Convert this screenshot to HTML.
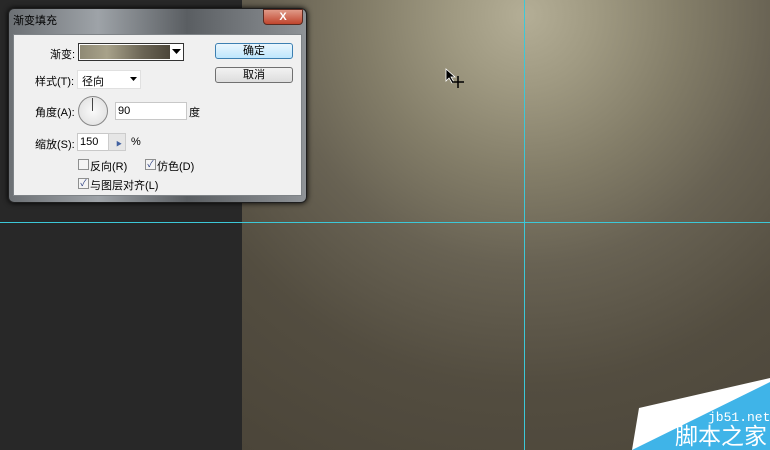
<!DOCTYPE html><html><head><style>
body{margin:0;width:770px;height:450px;overflow:hidden;position:relative;background:#282828;font-family:"Liberation Sans","Noto Sans CJK SC",sans-serif;font-size:11px;color:#000}
.a{position:absolute}
.canvas{left:242px;top:0;width:528px;height:450px;background:radial-gradient(circle at 283px 15px,#b4ae96 0,#a09a82 70px,#837d68 160px,#686253 250px,#534d40 370px,#4b4539 520px)}
.lbl{position:absolute;font-size:11px}
.box{position:absolute;background:#fff;border:1px solid #abadb3}
.btn{position:absolute;width:76px;height:14px;border:1px solid #707070;border-radius:3px;background:linear-gradient(#f2f2f2,#dddddd);text-align:center;line-height:14px}
.cb{position:absolute;width:9px;height:9px;border:1px solid #8e8f8f;background:#f4f4f4;font-size:9px;line-height:9px;text-align:center;color:#2a3e80}
</style></head><body>
<div class="a canvas"></div>
<div class="a" style="left:524px;top:0;width:1px;height:450px;background:#3cc8d8"></div>
<div class="a" style="left:0;top:222px;width:770px;height:1px;background:#3cc8d8"></div>
<svg class="a" style="left:445px;top:68px" width="20" height="20"><path d="M1 1 L1 13 L4 10 L7 15 L9 14 L6 9 L10 9 Z" fill="#000" stroke="#fff" stroke-width=".8"/><path d="M13 8v12M7 14h12" stroke="#000" stroke-width="1.5"/></svg>
<div class="a" style="left:8px;top:8px;width:299px;height:195px;border-radius:6px;background:linear-gradient(90deg,#6c7074,#9ea3a8 30%,#5a5e62 60%,#8f9397);box-shadow:0 0 6px #000;border:1px solid #1e1e1e;box-sizing:border-box"></div>
<div class="a" style="left:13px;top:12px;font-size:11px;color:#000">渐变填充</div>
<div class="a" style="left:263px;top:9px;width:40px;height:16px;border-radius:0 0 4px 4px;background:linear-gradient(#e09a88,#c0452d);border:1px solid #5a2a20;box-sizing:border-box;color:#fff;font-weight:bold;text-align:center;line-height:14px;font-size:11px">X</div>
<div class="a" style="left:13px;top:34px;width:289px;height:162px;background:#f0f0f0;border:1px solid #7e8387;box-sizing:border-box"></div>
<div class="lbl" style="left:50px;top:46px">渐变:</div>
<div class="a" style="left:78px;top:43px;width:106px;height:18px;border:1px solid #333;box-sizing:border-box;background:#fff"></div>
<div class="a" style="left:80px;top:45px;width:90px;height:14px;background:linear-gradient(90deg,#8f8a75,#a8a28a 30%,#6a6454 70%,#4c463a)"></div>
<svg class="a" style="left:172px;top:49px" width="10" height="6"><path d="M0 0h9l-4.5 5z"/></svg>
<div class="lbl" style="left:35px;top:73px">样式(T):</div>
<div class="box" style="left:77px;top:70px;width:62px;height:17px;border-color:#e0e0e0"></div>
<div class="lbl" style="left:82px;top:73px">径向</div>
<svg class="a" style="left:130px;top:77px" width="8" height="5"><path d="M0 0h7l-3.5 4z"/></svg>
<div class="lbl" style="left:35px;top:104px">角度(A):</div>
<div class="a" style="left:78px;top:96px;width:28px;height:28px;border-radius:50%;border:1px solid #888;background:radial-gradient(#fafafa,#dcdcdc)"></div>
<div class="a" style="left:92px;top:98px;width:1px;height:13px;background:#444"></div>
<div class="box" style="left:115px;top:102px;width:70px;height:16px;border-color:#c8c8c8"></div>
<div class="lbl" style="left:118px;top:105px">90</div>
<div class="lbl" style="left:189px;top:104px">度</div>
<div class="lbl" style="left:35px;top:136px">缩放(S):</div>
<div class="box" style="left:77px;top:133px;width:30px;height:16px;border-color:#c8c8c8"></div>
<div class="a" style="left:108px;top:133px;width:18px;height:18px;background:#e6e6e6;border:1px solid #ccc;box-sizing:border-box"></div>
<div class="lbl" style="left:80px;top:136px">150</div>
<div class="a" style="left:116px;top:139px;font-size:6px;color:#4060a0">▶</div>
<div class="lbl" style="left:131px;top:136px">%</div>
<div class="cb" style="left:78px;top:159px"></div><div class="lbl" style="left:90px;top:158px">反向(R)</div>
<div class="cb" style="left:145px;top:159px">✓</div><div class="lbl" style="left:157px;top:158px">仿色(D)</div>
<div class="cb" style="left:78px;top:178px">✓</div><div class="lbl" style="left:90px;top:177px">与图层对齐(L)</div>
<div class="btn" style="left:215px;top:43px;border-color:#3c7fb1;background:linear-gradient(#eaf6fd,#bee6fd)">确定</div>
<div class="btn" style="left:215px;top:67px">取消</div>
<svg class="a" style="left:620px;top:370px" width="150" height="80"><path d="M12 80 L19 38 L150 8 L150 80Z" fill="#fff"/><path d="M12 80 L150 12 L150 80Z" fill="#3fb4e8"/></svg>
<div class="a" style="left:708px;top:410px;color:#fff;font-family:'Liberation Mono',monospace;font-size:13px">jb51.net</div>
<div class="a" style="left:675px;top:424px;color:#fff;font-size:23px;line-height:24px">脚本之家</div>
</body></html>
